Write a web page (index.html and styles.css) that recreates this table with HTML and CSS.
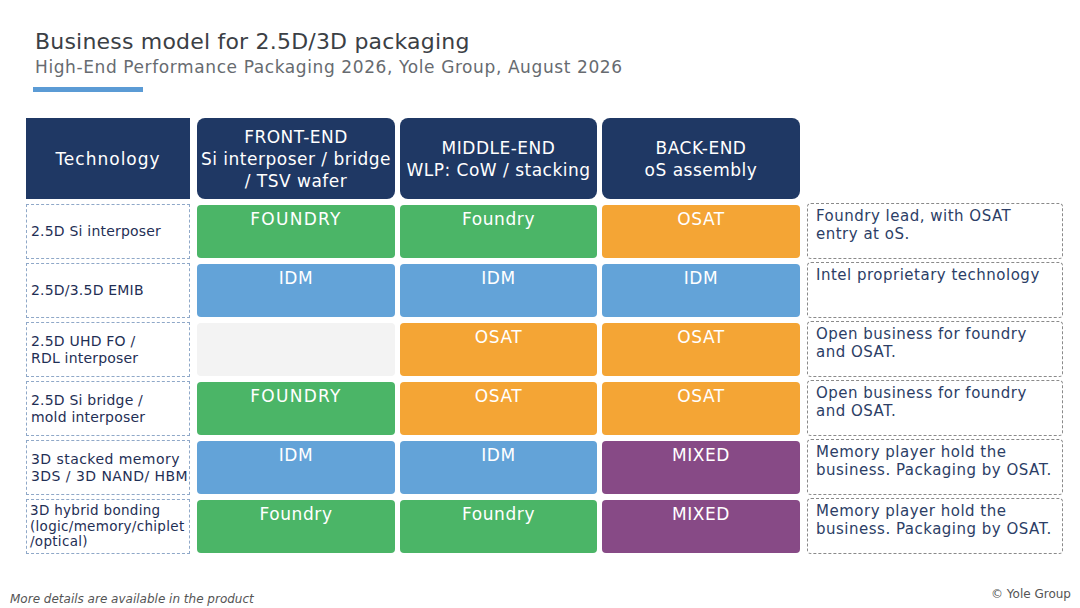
FILE: index.html
```html
<!DOCTYPE html>
<html>
<head>
<meta charset="utf-8">
<link rel="stylesheet" href="styles.css">
</head>
<body>
<div class="slide">
  <header class="head">
    <h1 class="title">Business model for 2.5D/3D packaging</h1>
    <p class="subtitle">High-End Performance Packaging 2026, Yole Group, August 2026</p>
    <div class="accent"></div>
  </header>

  <div class="table">
    <div class="th th-tech">Technology</div>
    <div class="th">FRONT-END<br>Si interposer / bridge<br>/ TSV wafer</div>
    <div class="th">MIDDLE-END<br>WLP: CoW / stacking</div>
    <div class="th">BACK-END<br>oS assembly</div>
    <div class="spacer"></div>

    <div class="label">2.5D Si interposer</div>
    <div class="cell green caps">FOUNDRY</div>
    <div class="cell green">Foundry</div>
    <div class="cell orange">OSAT</div>
    <div class="note">Foundry lead, with OSAT<br>entry at oS.</div>

    <div class="label">2.5D/3.5D EMIB</div>
    <div class="cell blue">IDM</div>
    <div class="cell blue">IDM</div>
    <div class="cell blue">IDM</div>
    <div class="note">Intel proprietary technology</div>

    <div class="label">2.5D UHD FO /<br>RDL interposer</div>
    <div class="cell empty"></div>
    <div class="cell orange">OSAT</div>
    <div class="cell orange">OSAT</div>
    <div class="note">Open business for foundry<br>and OSAT.</div>

    <div class="label">2.5D Si bridge /<br>mold interposer</div>
    <div class="cell green caps">FOUNDRY</div>
    <div class="cell orange">OSAT</div>
    <div class="cell orange">OSAT</div>
    <div class="note">Open business for foundry<br>and OSAT.</div>

    <div class="label label-wide">3D stacked memory<br>3DS / 3D NAND/ HBM</div>
    <div class="cell blue">IDM</div>
    <div class="cell blue">IDM</div>
    <div class="cell purple">MIXED</div>
    <div class="note">Memory player hold the<br>business. Packaging by OSAT.</div>

    <div class="label label-3">3D hybrid bonding<br>(logic/memory/chiplet<br>/optical)</div>
    <div class="cell green">Foundry</div>
    <div class="cell green">Foundry</div>
    <div class="cell purple">MIXED</div>
    <div class="note">Memory player hold the<br>business. Packaging by OSAT.</div>
  </div>

  <footer class="foot">
    <span class="more">More details are available in the product</span>
    <span class="copy">© Yole Group</span>
  </footer>
</div>
</body>
</html>
```

FILE: styles.css
```css
* { box-sizing: border-box; }
html, body { margin: 0; padding: 0; background: #fff; }
body { font-family: "DejaVu Sans", "Open Sans", sans-serif; }

.slide {
  width: 1080px;
  height: 608px;
  position: relative;
  overflow: hidden;
}

.head { padding: 28px 0 0 35px; }
.title {
  margin: 0;
  font-size: 22px;
  font-weight: 400;
  color: #3b4045;
  line-height: 28px;
  letter-spacing: 0.2px;
}
.subtitle {
  margin: 0;
  font-size: 17px;
  color: #676b70;
  line-height: 22px;
  letter-spacing: 0.6px;
}
.accent {
  margin: 9px 0 0 -2px;
  width: 110px;
  height: 5px;
  background: #5b9bd5;
}

.table {
  margin: 26px 0 0 26px;
  display: grid;
  grid-template-columns: 166px 198px 197px 198px 258px;
  grid-template-rows: 81px repeat(6, 53px);
  column-gap: 5px;
  row-gap: 6px;
}

.th {
  background: #1f3864;
  color: #fff;
  border-radius: 8px;
  font-size: 17px;
  line-height: 22px;
  letter-spacing: 0.5px;
  white-space: nowrap;
  display: flex;
  align-items: center;
  justify-content: center;
  text-align: center;
}
.th-tech { border-radius: 0; width: 164px; letter-spacing: 1px; }

.label {
  width: 164px;
  height: 55px;
  margin-top: -1px;
  border: 1px dashed #8fa8c8;
  color: #1f2f55;
  font-size: 14px;
  line-height: 17px;
  letter-spacing: 0.2px;
  padding: 0 4px;
  white-space: nowrap;
  display: flex;
  align-items: center;
}
.label-wide { letter-spacing: 0.45px; }
.label-3 { font-size: 13.5px; line-height: 15.5px; letter-spacing: 0.3px; padding-left: 3px; }

.cell {
  border-radius: 4px;
  color: #fff;
  font-size: 17px;
  line-height: 22px;
  text-align: center;
  padding-top: 3px;
  letter-spacing: 0.6px;
}
.caps { letter-spacing: 1.3px; }
.green { background: #4bb567; }
.blue { background: #63a3d8; }
.orange { background: #f4a535; }
.purple { background: #874a86; }
.empty { background: #f3f3f3; }

.note {
  margin-left: 2px;
  margin-top: -2px;
  height: 56px;
  border: 1px dashed #8a8a8a;
  border-radius: 4px;
  color: #2c3e66;
  font-size: 15px;
  line-height: 18px;
  letter-spacing: 0.5px;
  padding: 3px 4px 0 8px;
  white-space: nowrap;
}

.foot {
  position: absolute;
  left: 0; right: 0; bottom: 0;
  height: 30px;
  display: flex;
  justify-content: space-between;
  align-items: flex-start;
  padding: 0 9px 0 10px;
}
.more {
  margin-top: 14px;
  font-size: 12px;
  font-style: italic;
  color: #555;
}
.copy {
  margin-top: 9px;
  font-size: 12px;
  color: #555;
}
```
